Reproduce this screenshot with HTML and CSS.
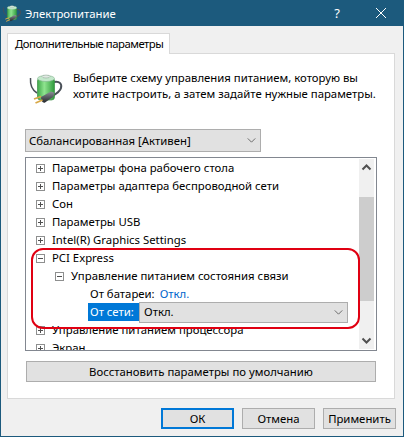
FILE: index.html
```html
<!DOCTYPE html>
<html lang="ru">

<head>
	<meta charset="UTF-8">
	<title>Электропитание</title>
	<link rel="stylesheet" href="styles.css">
</head>

<body>
	<svg class="defs" width="0" height="0">
		<defs>
			<linearGradient id="batteryFill" x1="0" y1="0" x2="1" y2="0">
				<stop offset="0" stop-color="#3fa84a"/>
				<stop offset="0.4" stop-color="#8fe48f"/>
				<stop offset="1" stop-color="#2f9a3c"/>
			</linearGradient>
			<linearGradient id="plugFill" x1="0" y1="0" x2="0" y2="1">
				<stop offset="0" stop-color="#8a8f96"/>
				<stop offset="1" stop-color="#24272b"/>
			</linearGradient>
			<symbol id="powerIcon" viewBox="28 70 36 36">
				<path d="M30.500 78 C30 85 32 90 37 93" fill="none" stroke="#4a5058" stroke-width="1.500"/>
				<path d="M54 82 C60 81 62 84 61 88 C60 92 56 94 52 96" fill="none" stroke="#4a5058" stroke-width="2"/>
				<rect x="37.500" y="78" width="17" height="22" rx="3" fill="url(#batteryFill)" stroke="#3c8f48" stroke-width="0.700"/>
				<ellipse cx="46" cy="78.500" rx="8.500" ry="3" fill="#c4e8cc" stroke="#7fb48b" stroke-width="0.600"/>
				<ellipse cx="46" cy="76.500" rx="4" ry="1.500" fill="#dfe9e2" stroke="#8aa090" stroke-width="0.500"/>
				<path d="M41 97 L50 92 C53 91 55 93 54 95 L53 97 L45 102.500 C43 103.500 41 101 41 97Z" fill="url(#plugFill)"/>
				<path d="M34 99 L41 96.500 M35.500 103 L42.500 100" stroke="#d8a848" stroke-width="1.800" fill="none"/>
			</symbol>
		</defs>
	</svg>

	<div class="window">
		<div class="titlebar">
			<svg class="title-icon"><use href="#powerIcon"/></svg>
			<span class="title-text">Электропитание</span>
			<span class="title-help">?</span>
			<svg class="title-close" width="10" height="10" viewBox="0 0 10 10">
				<path d="M0 0 L10 10 M10 0 L0 10" stroke="#fff" stroke-width="1"/>
			</svg>
		</div>

		<div class="content">
			<div class="tab">Дополнительные параметры</div>
			<div class="panel">
				<div class="intro">
					<svg class="intro-icon"><use href="#powerIcon"/></svg>
					<p>Выберите схему управления питанием, которую вы<br>хотите настроить, а затем задайте нужные параметры.</p>
				</div>

				<div class="combo plan-select">
					<span>Сбалансированная [Активен]</span>
					<svg class="chevron" width="9" height="5" viewBox="0 0 10 6"><path d="M0.500 0.500 L5 5 L9.500 0.500" fill="none" stroke="#555"/></svg>
				</div>

				<div class="tree">
					<div class="tree-rows">
						<div class="row"><i class="exp plus"></i>Параметры фона рабочего стола</div>
						<div class="row"><i class="exp plus"></i>Параметры адаптера беспроводной сети</div>
						<div class="row"><i class="exp plus"></i>Сон</div>
						<div class="row"><i class="exp plus"></i>Параметры USB</div>
						<div class="row"><i class="exp plus"></i>Intel(R) Graphics Settings</div>
						<div class="row"><i class="exp"></i>PCI Express</div>
						<div class="row level-2"><i class="exp"></i>Управление питанием состояния связи</div>
						<div class="row level-3">От батареи:<a class="value">Откл.</a></div>
						<div class="row level-3 selected">
							<span class="sel-label">От сети:</span>
							<div class="combo row-select">
								<span>Откл.</span>
								<svg class="chevron" width="9" height="5" viewBox="0 0 10 6"><path d="M0.500 0.500 L5 5 L9.500 0.500" fill="none" stroke="#555"/></svg>
							</div>
						</div>
						<div class="row"><i class="exp plus"></i>Управление питанием процессора</div>
						<div class="row"><i class="exp plus"></i>Экран</div>
					</div>
					<div class="scrollbar">
						<svg class="sb-arrow" width="15" height="17" viewBox="0 0 15 17"><path d="M3.500 10.500 L7.500 6.500 L11.500 10.500" fill="none" stroke="#505050" stroke-width="2"/></svg>
						<div class="sb-track"><div class="sb-thumb"></div></div>
						<svg class="sb-arrow" width="15" height="17" viewBox="0 0 15 17"><path d="M3.500 6.500 L7.500 10.500 L11.500 6.500" fill="none" stroke="#505050" stroke-width="2"/></svg>
					</div>
					<div class="callout"></div>
				</div>

				<div class="btn restore">Восстановить параметры по умолчанию</div>
			</div>

			<div class="actions">
				<div class="btn action default">ОК</div>
				<div class="btn action">Отмена</div>
				<div class="btn action">Применить</div>
			</div>
		</div>
	</div>
</body>

</html>
```

FILE: styles.css
```css
body {
	margin: 0;
	font-family: "Noto Sans", Arial, sans-serif;
	font-size: 11.35px;
	color: #000;
	overflow: hidden;
}

.defs {
	display: block;
	height: 0;
}

.window {
	width: 404px;
	height: 437px;
	box-sizing: border-box;
	border: 1px solid #1c5a7d;
	border-top: none;
	background-color: #f0f0f0;
	display: flex;
	flex-direction: column;
}

.titlebar {
	height: 26px;
	margin: 0 -1px;
	flex-shrink: 0;
	background-color: #1c5a7d;
	color: #fff;
	display: flex;
	align-items: center;
}

.title-icon {
	width: 20px;
	height: 20px;
	margin-left: 2px;
}

.title-text {
	margin-left: 3px;
	flex: 1;
}

.title-help {
	font-size: 13px;
	margin-right: 36px;
}

.title-close {
	margin-right: 18px;
}

.content {
	flex: 1;
	display: flex;
	flex-direction: column;
	padding: 7px 8px 0 6px;
}

.tab {
	width: 163px;
	height: 21px;
	box-sizing: border-box;
	background-color: #fff;
	border: 1px solid #d9d9d9;
	border-bottom: none;
	padding-left: 7px;
	line-height: 19px;
	letter-spacing: -0.5px;
	margin-bottom: -1px;
	position: relative;
	z-index: 1;
	white-space: nowrap;
}

.panel {
	height: 346px;
	box-sizing: border-box;
	background-color: #fff;
	border: 1px solid #d9d9d9;
	padding: 0 18px 0 17px;
}

.intro {
	height: 75px;
	display: flex;
}

.intro-icon {
	width: 36px;
	height: 36px;
	margin: 16px 8px 0 3px;
	flex-shrink: 0;
}

.intro p {
	margin: 16px 0 0 1px;
	line-height: 16px;
	white-space: nowrap;
}

.combo {
	box-sizing: border-box;
	background-color: #e1e1e1;
	border: 1px solid #adadad;
	display: flex;
	align-items: center;
	justify-content: space-between;
}

.plan-select {
	width: 236px;
	height: 23px;
	padding: 0 4px 0 3px;
	margin-bottom: 5px;
}

.tree {
	width: 352px;
	height: 194px;
	box-sizing: border-box;
	border: 1px solid #828790;
	display: flex;
	overflow: hidden;
	position: relative;
}

.tree-rows {
	flex: 1;
	padding-top: 1px;
	overflow: hidden;
}

.row {
	height: 18px;
	line-height: 18px;
	display: flex;
	align-items: center;
	padding-left: 10px;
	white-space: nowrap;
}

.row.level-2 {
	padding-left: 29px;
}

.row.level-3 {
	padding-left: 64px;
}

.row.selected {
	padding-left: 62px;
}

.exp {
	width: 9px;
	height: 9px;
	box-sizing: border-box;
	border: 1px solid #8e8f8f;
	margin-right: 7px;
	flex-shrink: 0;
	background: linear-gradient(#505050, #505050) center / 5px 1px no-repeat;
}

.exp.plus {
	background:
		linear-gradient(#505050, #505050) center / 5px 1px no-repeat,
		linear-gradient(#505050, #505050) center / 1px 5px no-repeat;
}

.value {
	margin-left: 5px;
	color: #0066cc;
}

.sel-label {
	width: 51px;
	height: 18px;
	box-sizing: border-box;
	padding-left: 2px;
	background-color: #0078d7;
	color: #fff;
}

.row-select {
	width: 209px;
	height: 21px;
	padding: 0 4px 0 4px;
	margin-top: 0;
}

.scrollbar {
	width: 15px;
	margin: 1px 2px 1px 0;
	background-color: #f0f0f0;
	display: flex;
	flex-direction: column;
	flex-shrink: 0;
}

.sb-arrow {
	display: block;
	flex-shrink: 0;
}

.sb-track {
	flex: 1;
	padding-top: 21px;
}

.sb-thumb {
	height: 104px;
	background-color: #cdcdcd;
}

/* red annotation drawn over the tree */
.callout {
	position: absolute;
	left: 5px;
	top: 90px;
	width: 329px;
	height: 81px;
	box-sizing: border-box;
	border: 2px solid #e00012;
	border-radius: 12px;
}

.btn {
	box-sizing: border-box;
	background-color: #e1e1e1;
	border: 1px solid #adadad;
	text-align: center;
}

.restore {
	width: 350px;
	height: 21px;
	line-height: 19px;
	margin: 10px 0 0 1px;
}

.actions {
	display: flex;
	justify-content: flex-end;
	gap: 8px;
	margin-top: 9px;
	margin-right: -1px;
}

.action {
	width: 73px;
	height: 21px;
	line-height: 19px;
}

.action.default {
	border: 2px solid #0078d7;
	line-height: 17px;
}
```
